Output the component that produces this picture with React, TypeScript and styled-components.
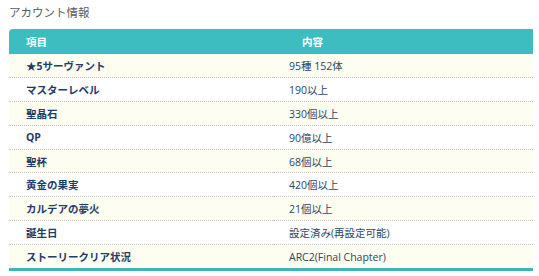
import React from "react";
import styled, { createGlobalStyle } from "styled-components";

const GlobalStyle = createGlobalStyle`
  body {
    margin: 0;
    background: #ffffff;
    font-family: "Open Sans", "Noto Sans CJK JP", sans-serif;
  }
`;

const Wrapper = styled.div`
  padding: 5px 6px 0 9px;
`;

const Title = styled.h2`
  margin: 0 0 8px 0;
  font-size: 11.5px;
  font-weight: normal;
  line-height: 16px;
  color: #5a5a5a;
`;

const Table = styled.table`
  width: 524px;
  table-layout: fixed;
  border-collapse: collapse;
  border-bottom: 3px solid #3fb5b8;
  font-size: 10.5px;
`;

const HeadCell = styled.th<{ $pad: number; $width?: number; $round?: boolean }>`
  background: #3dbdbf;
  color: #ffffff;
  font-weight: bold;
  text-align: left;
  height: 25px;
  width: ${({ $width }) => ($width ? `${$width}px` : "auto")};
  padding: 0 0 0 ${({ $pad }) => $pad}px;
  border-top-left-radius: ${({ $round }) => ($round ? "4px" : "0")};
`;

const Row = styled.tr<{ $odd: boolean }>`
  background: ${({ $odd }) => ($odd ? "#fdfdf0" : "#ffffff")};
  border-bottom: 1px dotted #c8c8c8;

  &:last-child {
    border-bottom: none;
  }
`;

const KeyCell = styled.td`
  height: 22.9px;
  padding: 0 0 0 17px;
  font-weight: bold;
  color: #1e3c68;
`;

const ValueCell = styled.td`
  padding: 0 0 0 16px;
  color: #2b4566;
`;

const rows: [string, string][] = [
  ["★5サーヴァント", "95種 152体"],
  ["マスターレベル", "190以上"],
  ["聖晶石", "330個以上"],
  ["QP", "90億以上"],
  ["聖杯", "68個以上"],
  ["黄金の果実", "420個以上"],
  ["カルデアの夢火", "21個以上"],
  ["誕生日", "設定済み(再設定可能)"],
  ["ストーリークリア状況", "ARC2(Final Chapter)"],
];

const App: React.FC = () => (
  <>
    <GlobalStyle />
    <Wrapper>
      <Title>アカウント情報</Title>
      <Table>
        <thead>
          <tr>
            <HeadCell $pad={17} $width={247} $round>
              項目
            </HeadCell>
            <HeadCell $pad={29}>内容</HeadCell>
          </tr>
        </thead>
        <tbody>
          {rows.map(([key, value], i) => (
            <Row key={key} $odd={i % 2 === 0}>
              <KeyCell>{key}</KeyCell>
              <ValueCell>{value}</ValueCell>
            </Row>
          ))}
        </tbody>
      </Table>
    </Wrapper>
  </>
);

export default App;
